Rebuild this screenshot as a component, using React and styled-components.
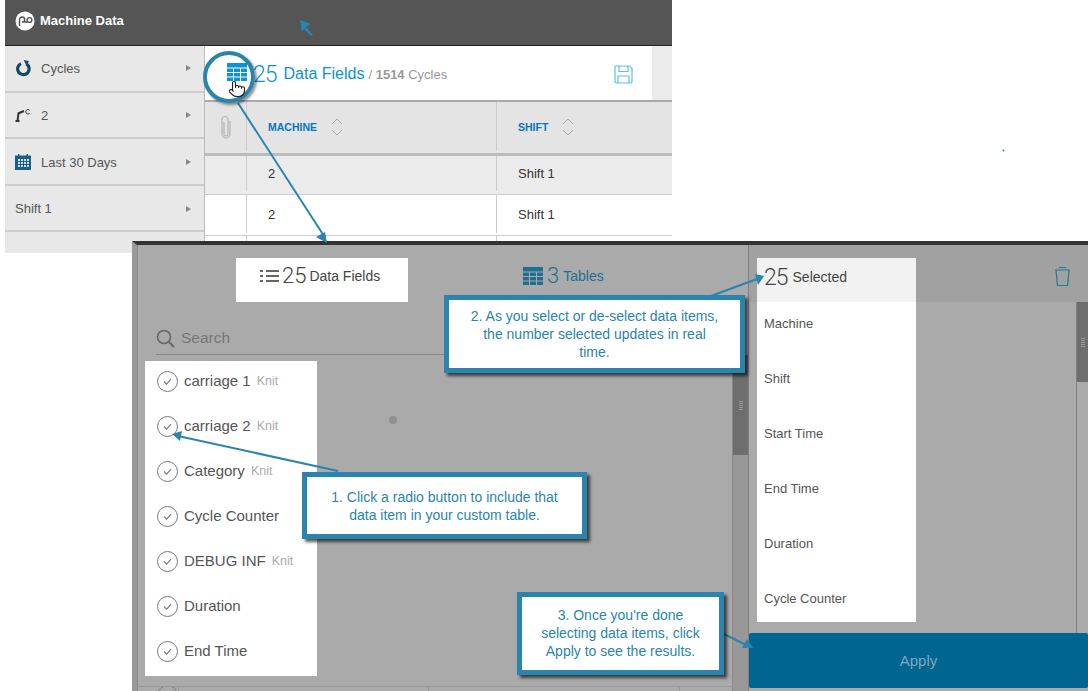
import React from "react";
import styled, { createGlobalStyle } from "styled-components";
import { Pointer } from "lucide-react";

const Global = createGlobalStyle`
  html, body { margin: 0; padding: 0; background: #fff; }
  * { box-sizing: border-box; }
  body { font-family: "Liberation Sans", Arial, sans-serif; }
`;
const Page = styled.div`position: relative; width: 1088px; height: 691px; overflow: hidden; background: #fff;`;

/* ---- top screenshot ---- */
const Shot = styled.div`margin-left: 5px; width: 667px; height: 253px; display: flex; flex-direction: column; overflow: hidden;`;
const AppBar = styled.header`height: 46px; flex: none; background: #555; border-bottom: 1px solid #222; display: flex; align-items: center; gap: 5px; padding: 0 0 4px 10px; color: #fff; font-size: 13px; font-weight: 700;`;
const ShotBody = styled.div`flex: 1; display: flex;`;
const Sidebar = styled.nav`width: 200px; flex: none; background: #e8e8e8; border-right: 1px solid #bbb;`;
const SideRow = styled.div`height: 46.5px; border-bottom: 2px solid #ccc; display: flex; align-items: center; padding: 2px 13px 0 10px; color: #555; font-size: 13px; &:first-child { padding-top: 0; } &:nth-child(2) { padding-top: 1px; }`;
const SideIcon = styled.span`width: 26px; flex: none; display: flex; align-items: center;`;
const SideLabel = styled.span`flex: 1;`;
const Caret = styled.span`width: 0; height: 0; border-left: 5px solid #888; border-top: 3.5px solid transparent; border-bottom: 3.5px solid transparent;`;
const Main = styled.main`flex: 1; min-width: 0;`;
const ToolBar = styled.div`height: 56px; display: flex; background: #fff; border-bottom: 2px solid #aaa;`;
const ToolMain = styled.div`width: 447px; display: flex; align-items: center; padding: 2px 19px 0 22px; color: #0a94d0;`;
const ToolIcon = styled.span`display: flex; margin: -5px 6px 0 0;`;
const ToolFill = styled.div`flex: 1; background: #ebebeb;`;
const BigNum = styled.span`font-family: Roboto, "Liberation Sans", sans-serif; font-weight: 300; font-size: ${p => p.$size || 22}px; letter-spacing: ${p => p.$tight ? -1 : 0}px; line-height: 1;`;
const ToolTitle = styled.span`font-size: 16px; margin-left: 7px;`;
const ToolSub = styled.span`font-size: 13px; color: #999; margin-left: 4px; flex: 1; b { font-weight: 700; }`;
const Row = styled.div`display: grid; grid-template-columns: 42px 250px 1fr; height: ${p => p.$h}px; padding-bottom: ${p => p.$pb || 0}px; background: ${p => p.$bg}; border-bottom: ${p => p.$line};`;
const Cell = styled.div`display: flex; align-items: center; padding-left: 21px; border-right: 1px solid #ccc; color: #333; font-size: 13px; &:first-child { padding-left: 15px; } &:last-child { border-right: 0; }`;
const Th = styled.span`color: #0a74b8; font-size: 10.5px; font-weight: 700; margin-right: 14px;`;

/* ---- overlay panel ---- */
const Panel = styled.section`position: absolute; left: 132px; top: 241px; right: 0; bottom: 0; background: #aaa; border-top: 4px solid #333; border-left: 5px solid #999; display: flex;`;
const LeftCol = styled.div`position: relative; width: 612px; flex: none; display: flex; border-left: 1px solid #8c8c8c; border-right: 1px solid #808080;`;
const LeftMain = styled.div`flex: 1; min-width: 0; display: flex; flex-direction: column;`;
const Tabs = styled.div`height: 57px; flex: none; padding: 13px 0 0 98px; display: flex; align-items: flex-start;`;
const TabOn = styled.div`width: 172px; height: 44px; background: #fff; color: #444; display: flex; align-items: center; padding: 0 0 9px 24px; font-size: 14px; gap: 3px;`;
const TabOff = styled.div`height: 44px; margin-left: 115px; color: #1f6f93; display: flex; align-items: center; padding-bottom: 9px; font-size: 14px; gap: 4px;`;
const SearchRow = styled.div`height: 53px; margin: 0 0 6px 18px; border-bottom: 1px solid #888; display: flex; align-items: center; gap: 6px; padding-top: 20px; color: #777; font-size: 15.5px;`;
const FieldList = styled.ul`list-style: none; margin: 0 0 0 7px; padding: 0; width: 172px; background: #fff;`;
const Field = styled.li`height: 45px; padding: 0 0 7px 12px; display: flex; align-items: center; color: #555; font-size: 15px;`;
const Check = styled.svg`width: 21px; height: 21px; flex: none; margin: 2px 6px 0 0;`;
const Tag = styled.span`color: #aaa; font-size: 12.5px; margin: 2px 0 0 6px;`;
const Scroll = styled.div`width: 16px; flex: none; margin-top: 110px; background: #989898; border-left: 1px solid #888;`;
const Thumb = styled.div`height: ${p => p.$h}px; background: #6e6e6e; display: flex; align-items: center; justify-content: center;`;
const Grip = styled.span`width: 4px; height: 9px; background: repeating-linear-gradient(0deg, #999 0 1px, transparent 1px 2px);`;
const Footer = styled.div`position: absolute; left: 0; right: 0; bottom: 0; height: 5px; border-top: 1px solid #999; overflow: hidden;`;
const Peek = styled.span`position: absolute; left: 19px; top: -2px; width: 21px; height: 21px; border: 1px solid #777; border-radius: 50%;`;
const FooterLine = styled.span`position: absolute; left: ${p => p.$x}px; top: 0; bottom: 0; width: 1px; background: #999;`;

const RightCol = styled.div`flex: 1; min-width: 0; display: flex; flex-direction: column;`;
const RightHead = styled.div`height: 57px; flex: none; background: #a1a1a1; padding: 13px 17px 0 8px; display: flex; justify-content: space-between;`;
const Selected = styled.div`width: 159px; height: 44px; background: #f2f2f2; color: #444; padding: 0 0 6px 7px; display: flex; align-items: center; gap: 5px; font-size: 14px;`;
const Trash = styled.span`margin-top: 7px;`;
const RightBody = styled.div`height: 331px; flex: none; display: flex; justify-content: space-between; padding-left: 8px;`;
const ChosenList = styled.ul`list-style: none; margin: 0; padding: 0; width: 159px; height: 320px; overflow: hidden; background: #fff;`;
const Chosen = styled.li`height: 55px; padding: 0 0 13px 7px; display: flex; align-items: center; color: #555; font-size: 13px;`;
const RightScroll = styled.div`width: 12px; border-left: 1px solid #808080;`;
const Apply = styled.button`height: 55px; flex: none; border: 0; border-radius: 2px; margin: 0; padding: 0; background: #006690; color: #7fa6bb; font: 15px "Liberation Sans", Arial, sans-serif;`;

/* ---- annotations ---- */
const Callout = styled.div`
  position: absolute; left: ${p => p.$x}px; top: ${p => p.$y}px; width: ${p => p.$w}px; height: ${p => p.$h}px;
  background: #fff; border: 5px solid #2a84b0; box-shadow: 3px 3px 3px rgba(0,0,0,.65);
  color: #2a84b0; font-size: 14px; line-height: 18px; text-align: center;
  display: flex; align-items: center; justify-content: center; padding: ${p => p.$pt || 0}px 4px 1px;
`;
const Ring = styled.div`position: absolute; left: 203px; top: 51px; width: 52px; height: 52px; border: 4px solid #2a84a8; border-radius: 50%; box-shadow: 2px 2px 3px rgba(0,0,0,.45);`;
const Overlay = styled.svg`position: absolute; left: 0; top: 0; pointer-events: none;`;
const Cursor = styled.span`position: absolute; left: 228px; top: 80px; display: flex; color: #222;`;

const TableIcon = ({ color }) => (
  <svg width="20" height="18" viewBox="0 0 20 18" fill={color}>
    <rect x="0" y="0" width="20" height="4.5" />
    {[5.5, 10, 14.5].map(y => [0, 7, 14].map(x => <rect key={x + "-" + y} x={x} y={y} width="6" height="3.5" />))}
  </svg>
);
const Logo = () => (
  <svg width="20" height="20" viewBox="0 0 20 20">
    <circle cx="10" cy="10" r="9.5" fill="#fff" />
    <path d="M4.5 15V8.5a2.6 2.6 0 1 1 2.6 2.6h5.4" fill="none" stroke="#555" strokeWidth="1.5" />
    <circle cx="14.5" cy="9" r="2.4" fill="none" stroke="#555" strokeWidth="1.4" />
  </svg>
);
const CycleIcon = () => (
  <svg width="17" height="17" viewBox="0 0 17 17">
    <path d="M11.3 3.9a5.8 5.8 0 1 1-5.3-.3" fill="none" stroke="#124a63" strokeWidth="3.2" />
    <path d="M8.6 0 13.8 1 12 6.5z" fill="#124a63" />
  </svg>
);
const ArmIcon = () => (
  <svg width="16" height="14" viewBox="0 0 16 14" fill="none" stroke="#333">
    <path d="M0.5 13h4M2.5 13l1-8" strokeWidth="2" />
    <path d="M3 5.5 9 3" strokeWidth="2" />
    <path d="M14.5 2.2a2.2 2.2 0 1 0 0 3.2" strokeWidth="1" />
  </svg>
);
const CalendarIcon = () => (
  <svg width="16" height="16" viewBox="0 0 16 16">
    <path d="M0 1.5h3V0h1.5v1.5h7V0H13v1.5h3V16H0z" fill="#1a5f85" />
    {[5, 8, 11].map(y => [3, 6, 9, 12].map(x => <rect key={x + "-" + y} x={x} y={y} width="2" height="2" fill="#cfe0ea" />))}
  </svg>
);
const SaveIcon = () => (
  <svg width="19" height="19" viewBox="0 0 19 19" fill="none" stroke="#5cbfe8" strokeWidth="1.2">
    <path d="M2 1h13.5L18 3.5V16a2 2 0 0 1-2 2H3a2 2 0 0 1-2-2V2a1 1 0 0 1 1-1z" />
    <path d="M5 1v5.5h9V1M4 18v-7h11v7" />
  </svg>
);
const ClipIcon = () => (
  <svg width="12" height="24" viewBox="0 0 12 24" fill="none" stroke="#b5b5b5" strokeWidth="1.2">
    <path d="M4 7v12a2 2 0 0 0 4 0V4.5a3 3 0 0 0-6 0V19a4 4 0 0 0 8 0V6" />
  </svg>
);
const Sorter = () => (
  <svg width="12" height="20" viewBox="0 0 12 20" fill="none" stroke="#aaa" strokeWidth="1">
    <path d="M1 7l5-5 5 5M1 13l5 5 5-5" />
  </svg>
);
const ListIcon = () => (
  <svg width="19" height="14" viewBox="0 0 19 14" fill="none" stroke="#333" strokeWidth="1.6">
    <path d="M0 2h3M6 2h13M0 7h3M6 7h13M0 12h3M6 12h13" />
  </svg>
);
const SearchIcon = () => (
  <svg width="19" height="19" viewBox="0 0 19 19" fill="none" stroke="#666" strokeWidth="1.6">
    <circle cx="8" cy="8" r="6.5" />
    <path d="M13 13l5 5" strokeWidth="2" />
  </svg>
);
const TrashIcon = () => (
  <svg width="17" height="22" viewBox="0 0 17 22" fill="none" stroke="#1f7a9c" strokeWidth="1.2">
    <path d="M1 5h15M5 2.5h7M2 5l1.4 15.5h10.2L15 5" />
  </svg>
);
const CheckCircle = () => (
  <Check viewBox="0 0 21 21" fill="none" stroke="#777">
    <circle cx="10.5" cy="10.5" r="10" />
    <path d="M7 10.5l2.6 2.6L14 8.2" strokeWidth="1.1" />
  </Check>
);

const fields = [
  ["carriage 1", "Knit"], ["carriage 2", "Knit"], ["Category", "Knit"], ["Cycle Counter"],
  ["DEBUG INF", "Knit"], ["Duration"], ["End Time"],
];
const chosen = ["Machine", "Shift", "Start Time", "End Time", "Duration", "Cycle Counter"];
const side = [
  [<CycleIcon />, "Cycles"], [<ArmIcon />, "2"], [<CalendarIcon />, "Last 30 Days"], [null, "Shift 1"],
];
const B = "#2a84b0";

export default function App() {
  return (
    <Page>
      <Global />
      <Shot>
        <AppBar><Logo />Machine Data</AppBar>
        <ShotBody>
          <Sidebar>
            {side.map(([icon, label]) => (
              <SideRow key={label}>
                {icon && <SideIcon>{icon}</SideIcon>}
                <SideLabel>{label}</SideLabel>
                <Caret />
              </SideRow>
            ))}
          </Sidebar>
          <Main>
            <ToolBar>
              <ToolMain>
                <ToolIcon><TableIcon color="#0a94d0" /></ToolIcon>
                <BigNum $size={23} $tight>25</BigNum>
                <ToolTitle>Data Fields</ToolTitle>
                <ToolSub>/ <b>1514</b> Cycles</ToolSub>
                <SaveIcon />
              </ToolMain>
              <ToolFill />
            </ToolBar>
            <Row $h={54} $pb={2} $bg="#e4e4e4" $line="3px solid #bbb">
              <Cell><ClipIcon /></Cell>
              <Cell><Th>MACHINE</Th><Sorter /></Cell>
              <Cell><Th>SHIFT</Th><Sorter /></Cell>
            </Row>
            <Row $h={39} $pb={3} $bg="#ebebeb" $line="1px solid #ccc">
              <Cell /><Cell>2</Cell><Cell>Shift 1</Cell>
            </Row>
            <Row $h={41} $pb={2} $bg="#fff" $line="1px solid #ccc">
              <Cell /><Cell>2</Cell><Cell>Shift 1</Cell>
            </Row>
            <Row $h={20} $bg="#fff" $line="0"><Cell /><Cell /><Cell /></Row>
          </Main>
        </ShotBody>
      </Shot>

      <Panel>
        <LeftCol>
          <LeftMain>
            <Tabs>
              <TabOn><ListIcon /><BigNum>25</BigNum>Data Fields</TabOn>
              <TabOff><TableIcon color="#1f6f93" /><BigNum>3</BigNum>Tables</TabOff>
            </Tabs>
            <SearchRow><SearchIcon />Search</SearchRow>
            <FieldList>
              {fields.map(([name, tag]) => (
                <Field key={name}>
                  <CheckCircle />
                  {name}
                  {tag && <Tag>{tag}</Tag>}
                </Field>
              ))}
            </FieldList>
          </LeftMain>
          <Scroll><Thumb $h={100}><Grip /></Thumb></Scroll>
          <Footer>
            <Peek />
            <FooterLine $x={40} />
            <FooterLine $x={290} />
            <FooterLine $x={541} />
          </Footer>
        </LeftCol>
        <RightCol>
          <RightHead>
            <Selected><BigNum $size={23} $tight>25</BigNum>Selected</Selected>
            <Trash><TrashIcon /></Trash>
          </RightHead>
          <RightBody>
            <ChosenList>
              {chosen.map(c => <Chosen key={c}>{c}</Chosen>)}
            </ChosenList>
            <RightScroll><Thumb $h={80}><Grip /></Thumb></RightScroll>
          </RightBody>
          <Apply>Apply</Apply>
        </RightCol>
      </Panel>

      <Overlay width="1088" height="691" viewBox="0 0 1088 691">
        <g stroke={B} strokeWidth="2" fill={B}>
          <line x1="238" y1="103" x2="324" y2="236" />
          <line x1="338" y1="471" x2="178" y2="436" />
          <line x1="711" y1="296" x2="757" y2="279" />
          <line x1="724" y1="634" x2="748" y2="646" />
        </g>
        <g fill={B}>
          <polygon points="327,243 316,237 325,232" />
          <polygon points="172,434 182,431 180,441" />
          <polygon points="764,276 755,274 758,285" />
          <polygon points="753,648 742,648 747,639" />
          <polygon points="300,20 311,24 306,27 313,35 311,36 304,29 302,32" />
          <circle cx="1003.5" cy="150.5" r="1" />
        </g>
        <circle cx="393" cy="420" r="4" fill="#909090" />
      </Overlay>
      <Ring />
      <Cursor><Pointer size={18} fill="#fff" strokeWidth={1.5} /></Cursor>

      <Callout $x={302} $y={472} $w={285} $h={67} $pt={1}>
        <span>1. Click a radio button to include that<br />data item in your custom table.</span>
      </Callout>
      <Callout $x={444} $y={295} $w={301} $h={78} $pt={1}>
        <span>2. As you select or de-select data items,<br />the number selected updates in real<br />time.</span>
      </Callout>
      <Callout $x={517} $y={592} $w={207} $h={83}>
        <span>3. Once you're done<br />selecting data items, click<br />Apply to see the results.</span>
      </Callout>
    </Page>
  );
}
